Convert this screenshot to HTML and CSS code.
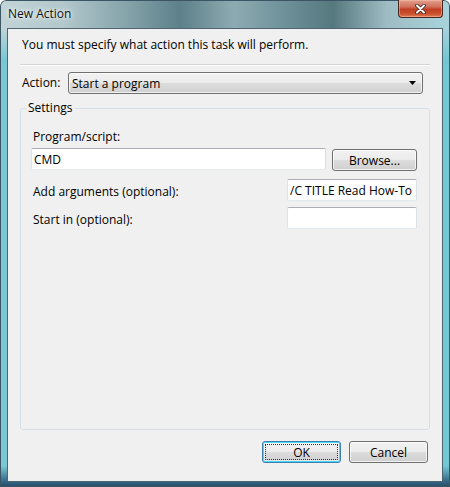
FILE: index.html
```html
<!DOCTYPE html>
<html lang="en">
<head>
    <meta charset="UTF-8">
    <meta name="viewport" content="width=device-width, initial-scale=1.0">
    <title>New Action</title>
    <link rel="stylesheet" href="styles.css">
</head>
<body>
    <div class="window">
        <!-- Title bar -->
        <div class="titlebar">
            <span class="title">New Action</span>
            <button class="close-btn" aria-label="Close">
                <svg width="11" height="10" viewBox="0 0 11 10">
                    <path d="M2 1.5 L9 8.5 M9 1.5 L2 8.5" stroke="#3a2420" stroke-width="3.6" stroke-linecap="round"/>
                    <path d="M2 1.5 L9 8.5 M9 1.5 L2 8.5" stroke="#ffffff" stroke-width="2" stroke-linecap="round"/>
                </svg>
            </button>
        </div>

        <!-- Dialog body -->
        <div class="client">
            <p class="intro">You must specify what action this task will perform.</p>
            <div class="separator"></div>

            <div class="action-row">
                <span class="action-label">Action:</span>
                <div class="combo">
                    <span>Start a program</span>
                    <svg width="7" height="4" viewBox="0 0 7 4"><path d="M0 0 H7 L3.5 4 Z" fill="#000"/></svg>
                </div>
            </div>

            <fieldset class="settings">
                <legend>Settings</legend>
                <div class="field-label">Program/script:</div>
                <div class="program-row">
                    <input class="textbox program-input" type="text" value="CMD">
                    <button class="btn browse-btn">Browse...</button>
                </div>
                <div class="option-row first">
                    <span class="option-label">Add arguments (optional):</span>
                    <input class="textbox option-input" type="text" value="/C TITLE Read How-To Geek">
                </div>
                <div class="option-row">
                    <span class="option-label">Start in (optional):</span>
                    <input class="textbox option-input" type="text" value="">
                </div>
            </fieldset>

            <!-- Dialog buttons -->
            <div class="footer">
                <button class="btn dialog-btn default-btn">OK</button>
                <button class="btn dialog-btn">Cancel</button>
            </div>
        </div>
    </div>
</body>
</html>
```

FILE: styles.css
```css
/* Basic page styling */
body {
    margin: 0;
    padding: 0;
    font-family: "Open Sans", "Noto Sans", sans-serif;
    font-size: 12px;
    color: #000;
    background-color: #ffffff;
}

/* Aero window frame */
.window {
    width: 450px;
    height: 487px;
    display: flex;
    flex-direction: column;
    border-radius: 6px 6px 0 0;
    box-shadow: inset 0 0 0 1px #3a5664;
    background:
        linear-gradient(to bottom, transparent 0, transparent 28px, rgba(96, 196, 210, 0.75) 60px, rgba(96, 196, 210, 0.75) 466px, #3a6f8e 480px, #244a66 487px),
        linear-gradient(90deg, #c2d4d8 0%, #b2c8cc 14%, #86a4ab 28%, #5d808a 40%, #8eabb2 52%, #6c8f98 64%, #56787f 74%, #9fbcc3 86%, #a8d4dc 100%);
    overflow: hidden;
}

.titlebar {
    height: 28px;
    display: flex;
    align-items: flex-start;
}

.title {
    padding: 6px 0 0 8px;
    line-height: 16px;
    color: #111;
    text-shadow: 0 0 6px rgba(255, 255, 255, 0.95), 0 0 3px rgba(255, 255, 255, 0.9);
}

.close-btn {
    margin-left: auto;
    margin-right: 7px;
    width: 45px;
    height: 18px;
    padding: 0;
    display: flex;
    align-items: center;
    justify-content: center;
    border: 1px solid #4a2620;
    border-top: none;
    border-radius: 0 0 4px 4px;
    background: linear-gradient(to bottom, #e3a08e 0%, #d0705a 40%, #c03e22 55%, #c9502f 80%, #e07a55 100%);
    box-shadow: inset 0 0 0 1px rgba(255, 200, 180, 0.45);
}

/* Client area */
.client {
    flex: 1;
    margin: 0 7px 5px 7px;
    border: 1px solid #4d6471;
    background-color: #f0f0f0;
    display: flex;
    flex-direction: column;
}

.intro {
    margin: 8px 14px 0 14px;
    line-height: 16px;
}

.separator {
    margin: 11px 12px 0 12px;
    border-top: 1px solid #d5d5d5;
    border-bottom: 1px solid #ffffff;
}

/* Action combo box */
.action-row {
    margin: 6px 19px 0 14px;
    display: flex;
    align-items: center;
}

.action-label {
    width: 46px;
    line-height: 16px;
}

.combo {
    flex: 1;
    height: 22px;
    box-sizing: border-box;
    padding: 0 6px 0 3px;
    display: flex;
    align-items: center;
    justify-content: space-between;
    border: 1px solid #707070;
    border-radius: 3px;
    background: linear-gradient(to bottom, #f2f2f2 0%, #ebebeb 50%, #dddddd 51%, #cfcfcf 100%);
    box-shadow: inset 0 0 0 1px rgba(255, 255, 255, 0.7);
}

/* Settings group */
.settings {
    flex: 1;
    margin: 6px 12px 0 12px;
    padding: 13px 12px 0 10px;
    border: 1px solid #d5dfe5;
    border-radius: 3px;
    min-width: 0;
}

.settings legend {
    margin-left: -5px;
    padding: 0 2px;
    line-height: 16px;
}

.field-label {
    padding-left: 2px;
    line-height: 16px;
}

.program-row {
    margin-top: 3px;
    display: flex;
    align-items: flex-start;
    gap: 6px;
}

.textbox {
    height: 22px;
    box-sizing: border-box;
    margin: 0;
    padding: 0 2px;
    font-family: inherit;
    font-size: 12px;
    color: #000;
    background-color: #ffffff;
    border: 1px solid;
    border-color: #abadb3 #dbdfe6 #e3e9ef #e2e3ea;
    border-radius: 2px;
    outline: none;
}

.program-input {
    flex: 1;
    min-width: 0;
}

.option-row {
    margin-top: 6px;
    display: flex;
    align-items: center;
}

.option-row.first {
    margin-top: 8px;
}

.option-label {
    flex: 1;
    padding: 3px 0 0 2px;
    line-height: 16px;
}

.option-input {
    width: 130px;
}

/* Windows 7 push buttons */
.btn {
    height: 22px;
    margin: 0;
    padding: 0;
    font-family: inherit;
    font-size: 12px;
    color: #000;
    border: 1px solid #707070;
    border-radius: 3px;
    background: linear-gradient(to bottom, #f2f2f2 0%, #ebebeb 50%, #dddddd 51%, #cfcfcf 100%);
    box-shadow: inset 0 0 0 1px rgba(255, 255, 255, 0.7);
}

.browse-btn {
    width: 85px;
    margin-top: 1px;
}

.footer {
    padding: 11px 14px 18px 0;
    display: flex;
    justify-content: flex-end;
    gap: 8px;
}

.dialog-btn {
    width: 79px;
}

.default-btn {
    border-color: #3c7fb1;
    box-shadow: inset 0 0 0 1px #48d7fb, inset 0 0 0 2px rgba(255, 255, 255, 0.5);
    outline: 1px dotted #333;
    outline-offset: -4px;
}
```
